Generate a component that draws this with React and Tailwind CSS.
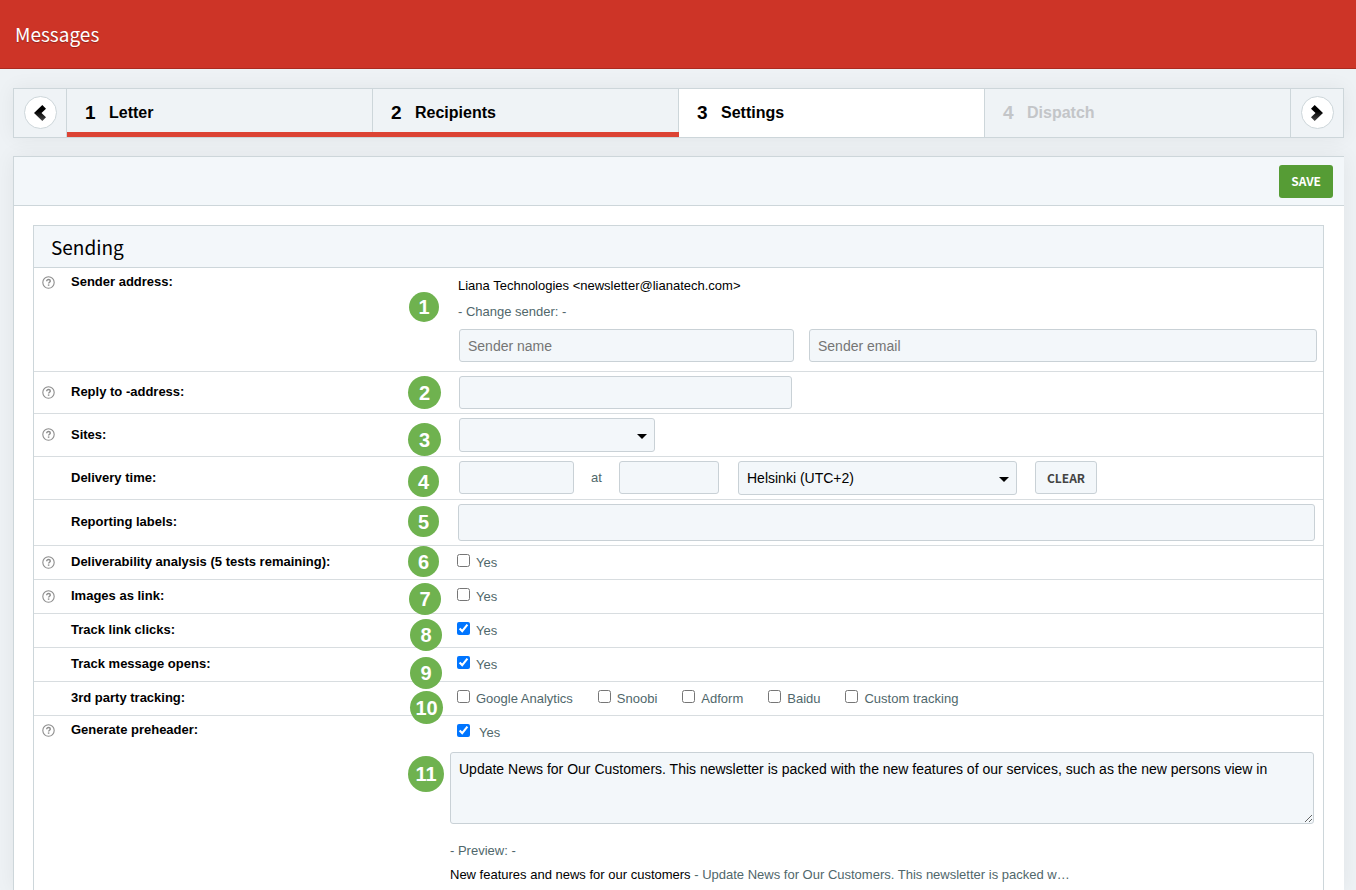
import clsx from 'clsx';

const fieldClass = 'h-[33px] rounded-[3px] border border-[#c9d1d6] bg-[#f3f7fa] px-2 text-[14px] text-black placeholder:text-[#757575]';

const steps = [
  { number: 1, title: 'Letter', state: 'done' },
  { number: 2, title: 'Recipients', state: 'done' },
  { number: 3, title: 'Settings', state: 'current' },
  { number: 4, title: 'Dispatch', state: 'disabled' },
];

const trackers = ['Google Analytics', 'Snoobi', 'Adform', 'Baidu', 'Custom tracking'];

function StepArrow({ label, flip }) {
  return (
    <div className={clsx('flex shrink-0 items-center justify-center pb-px', flip ? 'w-[52px]' : 'w-[53px]')}>
      <button type="button" aria-label={label} className="flex size-[33px] items-center justify-center rounded-full border border-[#cdd6da] bg-white">
        <svg width="12" height="16" viewBox="0 0 12 16">
          <defs>
            <linearGradient id={flip ? 'arrow-next' : 'arrow-prev'} x1="0" y1="0" x2="0" y2="1">
              <stop offset="0.4" stopColor="#000" />
              <stop offset="1" stopColor="#4a4a4a" />
            </linearGradient>
          </defs>
          {flip ? (
            <path d="M3.7 0 0 3.7 4.5 8 0 12.3 3.7 16 12 8z" fill="url(#arrow-next)" />
          ) : (
            <path d="M8.3 0 12 3.7 7.5 8l4.5 4.3L8.3 16 0 8z" fill="url(#arrow-prev)" />
          )}
        </svg>
      </button>
    </div>
  );
}

function Steps() {
  return (
    <nav className="flex h-[50px] divide-x divide-[#cdd6da] border border-[#cdd6da] bg-[#eff3f6] shadow-[0_0_20px_rgba(0,0,0,0.06)]">
      <StepArrow label="Previous step" />
      {steps.map(step => (
        <button
          key={step.number}
          type="button"
          disabled={step.state === 'disabled'}
          className={clsx(
            'relative flex flex-1 items-center pl-[18px] text-left font-bold',
            step.state === 'current' && 'bg-white',
            step.state === 'disabled' ? 'text-[#c3c5c8]' : 'text-black',
          )}
        >
          <span className="w-6 text-[19px]">{step.number}</span>
          <span className="text-[16px]">{step.title}</span>
          {step.state === 'done' && <span className="absolute -right-px bottom-0 left-0 h-[5px] bg-[#dc4334]" />}
        </button>
      ))}
      <StepArrow label="Next step" flip />
    </nav>
  );
}

function HelpIcon() {
  return (
    <svg width="13" height="13" viewBox="0 0 13 13" fill="none" stroke="#8d8d8d" role="img" aria-label="Help">
      <circle cx="6.5" cy="6.5" r="5.7" strokeWidth="1.1" />
      <path d="M4.7 5.2c0-1 .8-1.7 1.8-1.7s1.8.6 1.8 1.5c0 1.2-1.7 1.2-1.7 2.5" strokeWidth="1.4" />
      <path d="M6.6 8.4v1.4" strokeWidth="1.5" />
    </svg>
  );
}

function Row({ label, htmlFor, help, top, last, badge, badgeClass, children }) {
  return (
    <div className={clsx('relative flex', last ? 'flex-1' : 'border-b border-[#d8dde0]')}>
      <div className={clsx('flex w-[416px] shrink-0', top ? 'items-start pt-1' : 'items-center pb-px')}>
        <span className="flex h-5 w-[37px] items-center pl-2">{help && <HelpIcon />}</span>
        <label htmlFor={htmlFor} className="text-[13px] leading-5 font-bold text-black">{label}</label>
      </div>
      <div className="min-w-0 flex-1">{children}</div>
      <span className={clsx('absolute z-10 flex items-center justify-center rounded-full bg-[#6fb24f] font-bold text-white', badgeClass)}>
        {badge}
      </span>
    </div>
  );
}

function Select({ id, className, children, ...props }) {
  return (
    <div className={clsx('relative', className)}>
      <select id={id} className="h-[34px] w-full appearance-none rounded-[3px] border border-[#c9d1d6] bg-[#f3f7fa] pr-7 pl-2 text-[14px] text-black" {...props}>
        {children}
      </select>
      <svg width="10" height="5" viewBox="0 0 10 5" className="pointer-events-none absolute top-4 right-2">
        <path d="M0 0h10L5 5z" />
      </svg>
    </div>
  );
}

function Check({ id, label, checked }) {
  return (
    <div className="flex items-start gap-1.5 pt-2">
      <input id={id} type="checkbox" defaultChecked={checked} className="size-[13px] accent-[#0075ff]" />
      <label htmlFor={id} className="h-[25px] text-[13px] leading-[18px]">{label}</label>
    </div>
  );
}

export default function App() {
  return (
    <div className="flex min-h-screen flex-col bg-[#eef2f5] font-['Liberation_Sans',Arial,sans-serif] text-[13px] text-[#50676b]">
      <header className="flex h-[69px] items-center border-b border-[#ab2a1f] bg-[#cd3427] pb-px pl-[15px]">
        <h1 className="font-['Noto_Sans_CJK_SC',sans-serif] text-[19px] leading-8 font-normal text-white [text-shadow:0_1px_1px_rgba(0,0,0,0.3)]">Messages</h1>
      </header>

      <main className="flex flex-1 flex-col gap-[18px] pt-[19px] pr-3 pl-[13px]">
        <Steps />

        <form className="flex flex-1 flex-col border-t border-l border-[#cdd6da] bg-white shadow-[0_0_20px_rgba(0,0,0,0.06)]">
          <div className="flex h-[49px] items-center justify-end border-b border-[#cdd6da] bg-[#f3f7fa] pr-[11px]">
            <button type="button" className="h-[33px] rounded-[3px] bg-[#569c35] px-3 font-['Noto_Sans_CJK_SC',sans-serif] text-[12px] font-bold text-white">SAVE</button>
          </div>

          <section className="mt-[19px] mr-5 ml-[19px] flex flex-1 flex-col border-x border-t border-[#cdd6da]">
            <h2 className="h-[42px] border-b border-[#cdd6da] bg-[#f3f7fa] pl-[17px] font-['Noto_Sans_CJK_SC',sans-serif] text-[19px] leading-[42px] font-normal text-black">Sending</h2>

            <Row label="Sender address:" htmlFor="sender-name" help top badge="1" badgeClass="left-[375px] top-6 size-[30px] text-[20px]">
              <div className="pt-[5px] pr-1.5 pb-[9px] pl-2 leading-[26px]">
                <p className="text-black">Liana Technologies &lt;newsletter@lianatech.com&gt;</p>
                <p>- Change sender: -</p>
                <div className="mt-1 ml-px flex gap-[15px]">
                  <input id="sender-name" type="text" placeholder="Sender name" className={clsx(fieldClass, 'w-[335px]')} />
                  <input type="email" aria-label="Sender email" placeholder="Sender email" className={clsx(fieldClass, 'min-w-0 flex-1')} />
                </div>
              </div>
            </Row>

            <Row label="Reply to -address:" htmlFor="reply-to" help badge="2" badgeClass="left-[374px] top-1 size-[33px] text-[20px]">
              <div className="flex py-1 pl-[9px]">
                <input id="reply-to" type="text" className={clsx(fieldClass, 'w-[333px]')} />
              </div>
            </Row>

            <Row label="Sites:" htmlFor="sites" help badge="3" badgeClass="left-[374px] top-[9px] size-[33px] text-[20px]">
              <div className="flex py-1 pl-[9px]">
                <Select id="sites" className="w-[196px]">
                  <option value="" />
                </Select>
              </div>
            </Row>

            <Row label="Delivery time:" htmlFor="delivery-date" badge="4" badgeClass="left-[374px] top-[9px] size-[31px] text-[20px]">
              <div className="flex items-start py-1 pl-[9px]">
                <input id="delivery-date" type="text" className={clsx(fieldClass, 'w-[115px]')} />
                <span className="w-[45px] text-center leading-[33px]">at</span>
                <input type="text" aria-label="Delivery hour" className={clsx(fieldClass, 'w-[100px]')} />
                <Select aria-label="Time zone" className="ml-[19px] w-[279px]">
                  <option>Helsinki (UTC+2)</option>
                </Select>
                <button type="button" className="ml-[18px] h-[33px] w-[62px] rounded-[3px] border border-[#c9d1d6] bg-[#f3f7fa] font-['Noto_Sans_CJK_SC',sans-serif] text-[12px] font-bold text-[#444]">CLEAR</button>
              </div>
            </Row>

            <Row label="Reporting labels:" htmlFor="reporting-labels" badge="5" badgeClass="left-[374px] top-1.5 size-[31px] text-[20px]">
              <div className="flex py-1 pr-2 pl-2">
                <input id="reporting-labels" type="text" className="h-[37px] w-full rounded-[3px] border border-[#c9d1d6] bg-[#f3f7fa] px-2 text-[14px] text-black" />
              </div>
            </Row>

            <Row label="Deliverability analysis (5 tests remaining):" htmlFor="deliverability" help badge="6" badgeClass="left-[374px] top-0 size-[31px] text-[20px]">
              <div className="flex pl-[7px]"><Check id="deliverability" label="Yes" /></div>
            </Row>

            <Row label="Images as link:" htmlFor="images-as-link" help badge="7" badgeClass="left-[375px] top-[3px] size-8 text-[20px]">
              <div className="flex pl-[7px]"><Check id="images-as-link" label="Yes" /></div>
            </Row>

            <Row label="Track link clicks:" htmlFor="track-clicks" badge="8" badgeClass="left-[376px] top-[5px] size-8 text-[20px]">
              <div className="flex pl-[7px]"><Check id="track-clicks" label="Yes" checked /></div>
            </Row>

            <Row label="Track message opens:" htmlFor="track-opens" badge="9" badgeClass="left-[376px] top-[9px] size-8 text-[20px]">
              <div className="flex pl-[7px]"><Check id="track-opens" label="Yes" checked /></div>
            </Row>

            <Row label="3rd party tracking:" htmlFor="tracker-0" badge="10" badgeClass="left-[376px] top-[9px] size-[33px] text-[20px]">
              <div className="flex gap-[25px] pl-[7px]">
                {trackers.map((name, i) => (
                  <Check key={name} id={`tracker-${i}`} label={name} />
                ))}
              </div>
            </Row>

            <Row label="Generate preheader:" htmlFor="preheader" help top last badge="11" badgeClass="left-[374px] top-10 size-9 text-[20px]">
              <div className="pr-[9px]">
                <div className="flex items-start gap-[9px] pt-2 pl-[7px]">
                  <input id="preheader" type="checkbox" defaultChecked className="size-[13px] accent-[#0075ff]" />
                  <label htmlFor="preheader" className="leading-[18px]">Yes</label>
                </div>
                <textarea
                  aria-label="Preheader text"
                  defaultValue="Update News for Our Customers. This newsletter is packed with the new features of our services, such as the new persons view in"
                  className="mt-2.5 block h-[72px] w-full rounded-[3px] border border-[#c9d1d6] bg-[#f3f7fa] px-2 py-1.5 text-[14px] leading-5 text-black"
                />
                <p className="pt-[15px] leading-6">- Preview: -</p>
                <p className="leading-6">
                  <span className="text-black">New features and news for our customers</span> - Update News for Our Customers. This newsletter is packed w…
                </p>
              </div>
            </Row>
          </section>
        </form>
      </main>
    </div>
  );
}
